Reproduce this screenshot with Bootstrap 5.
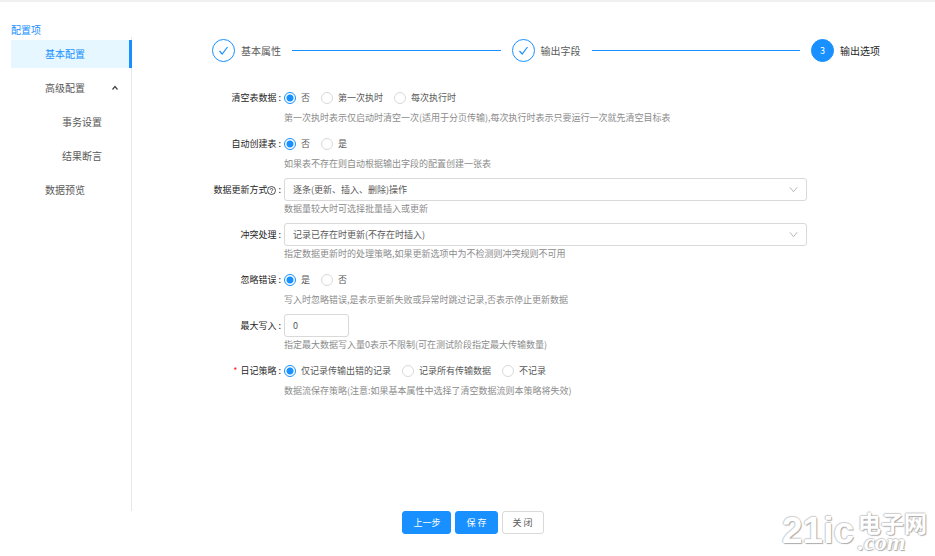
<!DOCTYPE html>
<html lang="zh-CN">
<head>
<meta charset="utf-8">
<meta name="viewport" content="width=device-width, initial-scale=1">
<title>基本配置</title>
<link rel="stylesheet" href="https://cdn.jsdelivr.net/npm/bootstrap@5.3.0/dist/css/bootstrap.min.css">
<style>
  :root { --blue: #1890ff; --line: #d9d9d9; }
  body { font-family: "Noto Sans CJK SC", "Noto Sans", sans-serif; font-size: 9px; line-height: 14px; color: #595959; border-top: 2px solid #f0f0f0; }
  .page { padding: 20px 0 24px 11px; }
  .side { width: 121px; }
  .side-title { font-size: 10px; line-height: 15px; color: var(--blue); }
  .side-menu { border-right: 1px solid #e8e8e8; font-size: 10px; padding-top: 3px; gap: 6px; }
  .side-menu .nav-link { color: #595959; padding: 0 13px 0 34px; height: 28px; }
  .side-menu .nav-link.sub { padding-left: 51px; }
  .side-menu .nav-link.active { color: var(--blue); background: #e6f7ff; border-right: 3px solid var(--blue); margin-right: -1px; }
  .content-area { padding: 17px 55px 0 80px; }
  .steps { font-size: 10px; margin-bottom: 24px; }
  .steps li { gap: 6px; }
  .step-dot { width: 23px; height: 23px; border: 1px solid var(--blue); color: var(--blue); }
  .step-now { color: #262626; }
  .step-now .step-dot { background: var(--blue); color: #fff; font-size: 9px; }
  .step-line { height: 1px; background: var(--blue); margin: 0 11px; }
  .settings { margin-right: 73px; }
  .set-row { gap: 3px; padding-bottom: 7px; }
  .set-label { width: 69px; line-height: 24px; color: #262626; white-space: nowrap; }
  .req { color: #f5222d; margin-right: 3px; }
  .set-main { min-width: 0; }
  .choices { height: 24px; gap: 11px; }
  .choice { gap: 5px; }
  .choice .form-check-input { width: 12px; height: 12px; margin: 0; border-color: var(--line); }
  .choice .form-check-input:checked { background: radial-gradient(circle, var(--blue) 3px, #fff 4px); border-color: var(--blue); }
  .box { height: 23px; font-size: 9px; line-height: 14px; color: #595959; border-color: var(--line); border-radius: 3px; padding: 0 8px; }
  .form-select.box { background-image: url("data:image/svg+xml,%3Csvg xmlns='http://www.w3.org/2000/svg' viewBox='0 0 10 10'%3E%3Cpath d='M1 2.500 5 7.500 9 2.500' fill='none' stroke='%23b0b0b0'/%3E%3C/svg%3E"); background-size: 9px 9px; background-position: right 8px center; }
  .number { width: 65px; }
  .hint { color: #8c8c8c; padding-top: 1px; }
  .actions { gap: 4px; }
  .actions .btn { font-size: 9px; line-height: 15px; border-radius: 3px; padding: 3px 10px; --bs-btn-border-color: var(--line); --bs-btn-color: #595959; }
  .actions .btn-primary { --bs-btn-bg: var(--blue); --bs-btn-border-color: var(--blue); --bs-btn-color: #fff; }
  .watermark { right: 8px; bottom: 5px; gap: 4px; color: #fff; text-shadow: 1px 1px 1px #aaa, -1px 0 1px #ccc, 0 -1px 1px #ccc; }
  .wm-num { font: bold 37px/40px "Liberation Sans", sans-serif; }
  .wm-cn { font-size: 23px; line-height: 22px; font-weight: 700; }
  .wm-com { font: italic bold 24px/18px "Liberation Serif", serif; }
</style>
<script src="https://cdn.jsdelivr.net/npm/bootstrap@5.3.0/dist/js/bootstrap.bundle.min.js" defer></script>
</head>
<body class="bg-white">
<div class="page d-flex flex-column min-vh-100">
  <div class="d-flex flex-grow-1">
    <aside class="side d-flex flex-column flex-shrink-0">
      <div class="side-title">配置项</div>
      <nav class="side-menu nav flex-column flex-nowrap flex-grow-1">
        <a class="nav-link active d-flex align-items-center" href="#">基本配置</a>
        <a class="nav-link d-flex align-items-center justify-content-between" href="#">高级配置
          <svg width="6" height="6" viewBox="0 0 6 6" fill="none" stroke="#434343" stroke-width="1.200" aria-hidden="true"><path d="M.5 4.500 3 1.500 5.500 4.500"/></svg>
        </a>
        <a class="nav-link sub d-flex align-items-center" href="#">事务设置</a>
        <a class="nav-link sub d-flex align-items-center" href="#">结果断言</a>
        <a class="nav-link d-flex align-items-center" href="#">数据预览</a>
      </nav>
    </aside>
    <main class="content-area flex-grow-1">
      <ol class="steps list-unstyled d-flex align-items-center">
        <li class="d-flex align-items-center"><span class="step-dot rounded-circle d-flex align-items-center justify-content-center"><svg width="11" height="11" viewBox="0 0 11 11" fill="none" stroke="currentColor" stroke-width="1.200" aria-hidden="true"><path d="M1.500 6 4.200 9 9.500 2"/></svg></span>基本属性</li>
        <li class="step-line flex-grow-1" aria-hidden="true"></li>
        <li class="d-flex align-items-center"><span class="step-dot rounded-circle d-flex align-items-center justify-content-center"><svg width="11" height="11" viewBox="0 0 11 11" fill="none" stroke="currentColor" stroke-width="1.200" aria-hidden="true"><path d="M1.500 6 4.200 9 9.500 2"/></svg></span>输出字段</li>
        <li class="step-line flex-grow-1" aria-hidden="true"></li>
        <li class="step-now d-flex align-items-center" aria-current="step"><span class="step-dot rounded-circle d-flex align-items-center justify-content-center">3</span>输出选项</li>
      </ol>
      <form class="settings" id="settings">
        <div class="set-row d-flex" role="radiogroup" aria-labelledby="l-clear">
          <div class="set-label d-flex justify-content-end" id="l-clear">清空表数据 :</div>
          <div class="set-main flex-grow-1">
            <div class="choices d-flex align-items-center">
              <label class="choice d-flex align-items-center"><input class="form-check-input" type="radio" name="clear" checked>否</label>
              <label class="choice d-flex align-items-center"><input class="form-check-input" type="radio" name="clear">第一次执时</label>
              <label class="choice d-flex align-items-center"><input class="form-check-input" type="radio" name="clear">每次执行时</label>
            </div>
            <div class="hint">第一次执时表示仅启动时清空一次(适用于分页传输),每次执行时表示只要运行一次就先清空目标表</div>
          </div>
        </div>
        <div class="set-row d-flex" role="radiogroup" aria-labelledby="l-create">
          <div class="set-label d-flex justify-content-end" id="l-create">自动创建表 :</div>
          <div class="set-main flex-grow-1">
            <div class="choices d-flex align-items-center">
              <label class="choice d-flex align-items-center"><input class="form-check-input" type="radio" name="create" checked>否</label>
              <label class="choice d-flex align-items-center"><input class="form-check-input" type="radio" name="create">是</label>
            </div>
            <div class="hint">如果表不存在则自动根据输出字段的配置创建一张表</div>
          </div>
        </div>
        <div class="set-row d-flex">
          <label class="set-label d-flex justify-content-end align-items-center align-self-start" for="mode">数据更新方式<svg width="9" height="9" viewBox="0 0 9 9" fill="none" stroke="currentColor" stroke-width=".8" aria-hidden="true"><circle cx="4.500" cy="4.500" r="4"/><path d="M3.200 3.700c0-1.700 2.600-1.700 2.600 0 0 .9-1.300.9-1.300 1.800M4.500 6.200v.8"/></svg><span>&nbsp;:</span></label>
          <div class="set-main flex-grow-1">
            <select class="form-select box" id="mode"><option>逐条(更新、插入、删除)操作</option></select>
            <div class="hint">数据量较大时可选择批量插入或更新</div>
          </div>
        </div>
        <div class="set-row d-flex">
          <label class="set-label d-flex justify-content-end" for="conflict">冲突处理 :</label>
          <div class="set-main flex-grow-1">
            <select class="form-select box" id="conflict"><option>记录已存在时更新(不存在时插入)</option></select>
            <div class="hint">指定数据更新时的处理策略,如果更新选项中为不检测则冲突规则不可用</div>
          </div>
        </div>
        <div class="set-row d-flex" role="radiogroup" aria-labelledby="l-ignore">
          <div class="set-label d-flex justify-content-end" id="l-ignore">忽略错误 :</div>
          <div class="set-main flex-grow-1">
            <div class="choices d-flex align-items-center">
              <label class="choice d-flex align-items-center"><input class="form-check-input" type="radio" name="ignore" checked>是</label>
              <label class="choice d-flex align-items-center"><input class="form-check-input" type="radio" name="ignore">否</label>
            </div>
            <div class="hint">写入时忽略错误,是表示更新失败或异常时跳过记录,否表示停止更新数据</div>
          </div>
        </div>
        <div class="set-row d-flex">
          <label class="set-label d-flex justify-content-end" for="max">最大写入 :</label>
          <div class="set-main flex-grow-1">
            <input class="form-control box number" id="max" type="text" value="0">
            <div class="hint">指定最大数据写入量0表示不限制(可在测试阶段指定最大传输数量)</div>
          </div>
        </div>
        <div class="set-row d-flex" role="radiogroup" aria-labelledby="l-log">
          <div class="set-label d-flex justify-content-end" id="l-log"><span class="req">*</span>日记策略 :</div>
          <div class="set-main flex-grow-1">
            <div class="choices d-flex align-items-center">
              <label class="choice d-flex align-items-center"><input class="form-check-input" type="radio" name="log" checked>仅记录传输出错的记录</label>
              <label class="choice d-flex align-items-center"><input class="form-check-input" type="radio" name="log">记录所有传输数据</label>
              <label class="choice d-flex align-items-center"><input class="form-check-input" type="radio" name="log">不记录</label>
            </div>
            <div class="hint">数据流保存策略(注意:如果基本属性中选择了清空数据流则本策略将失效)</div>
          </div>
        </div>
      </form>
    </main>
  </div>
  <div class="actions d-flex justify-content-center">
    <button type="button" class="btn btn-primary">上一步</button>
    <button type="submit" form="settings" class="btn btn-primary">保 存</button>
    <button type="button" class="btn">关 闭</button>
  </div>
</div>
<div class="watermark position-absolute d-flex align-items-center" aria-hidden="true">
  <span class="wm-num">21ic</span>
  <span class="d-flex flex-column"><span class="wm-cn">电子网</span><span class="wm-com">.com</span></span>
</div>
</body>
</html>
